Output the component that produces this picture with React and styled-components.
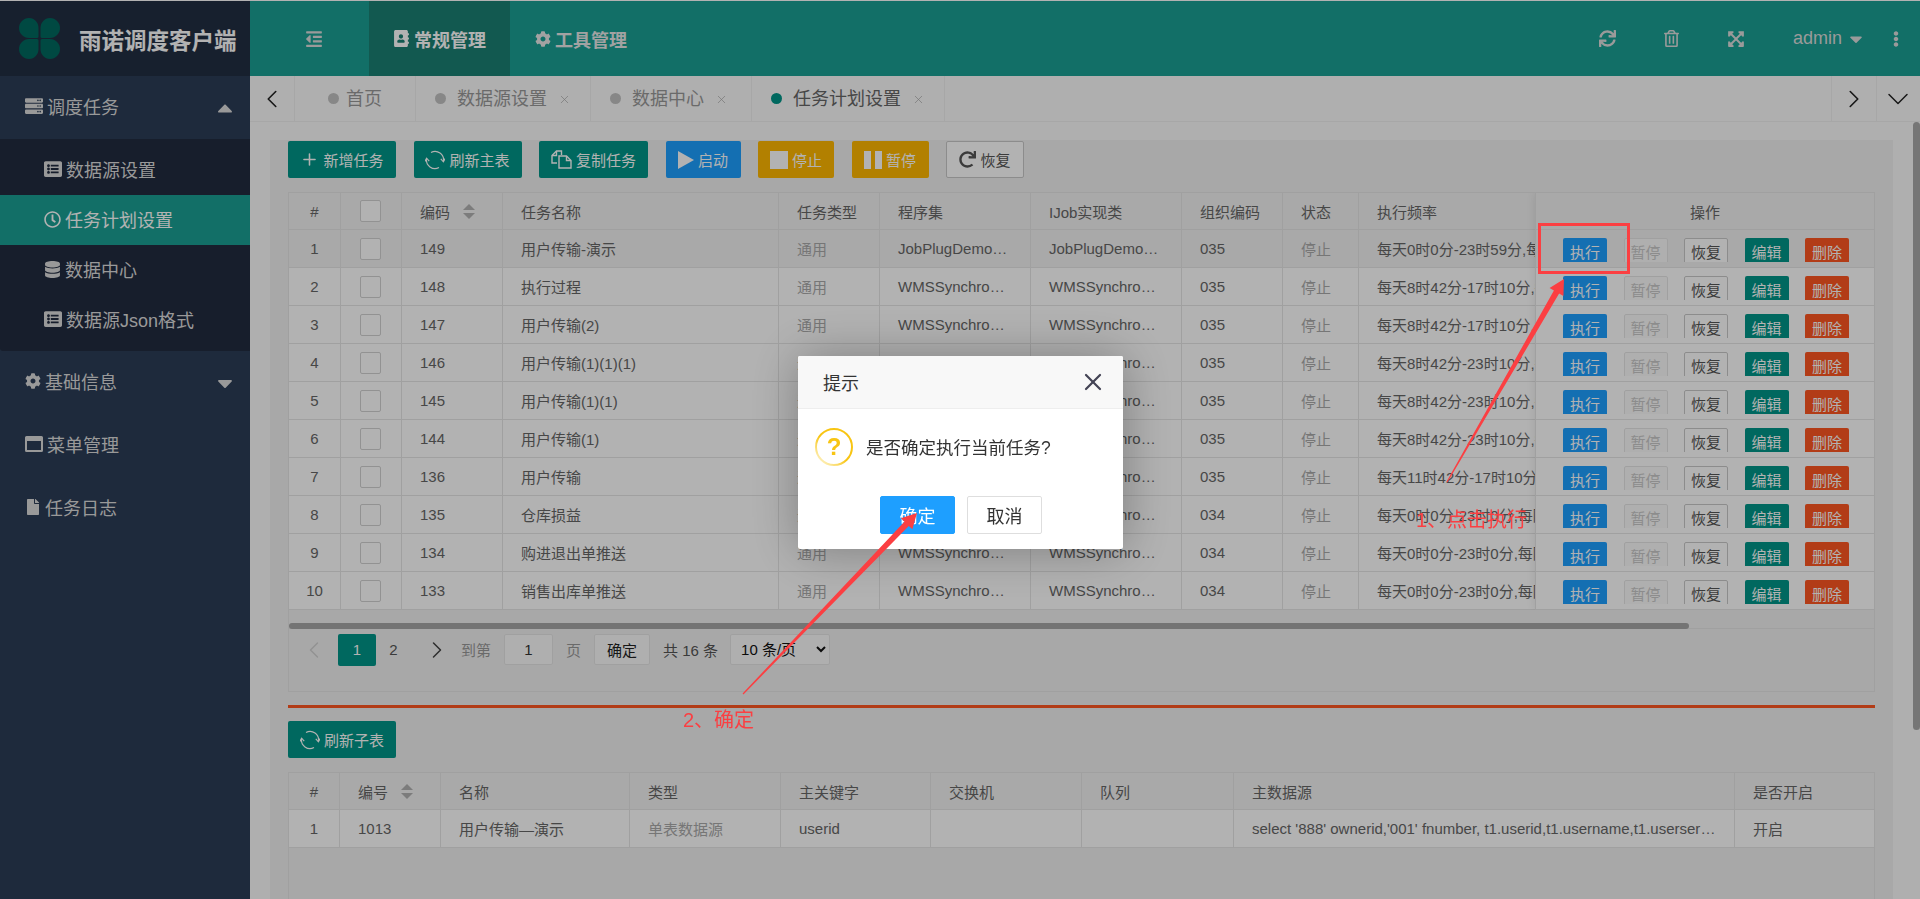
import React from "react"
import styled, { createGlobalStyle } from "styled-components"
import {
  FaServer,
  FaListAlt,
  FaRegClock,
  FaDatabase,
  FaCog,
  FaFile,
  FaAddressBook,
  FaOutdent,
  FaSync,
  FaRegTrashAlt,
  FaExpandArrowsAlt,
  FaEllipsisV,
  FaCaretDown,
  FaCaretUp,
  FaRedo,
} from "react-icons/fa"
import { ChevronLeft, ChevronRight, ChevronDown, Plus, X } from "lucide-react"

const FONT = `"Liberation Sans", "Noto Sans CJK SC", sans-serif`

const GlobalStyle = createGlobalStyle`
  html, body {
    margin: 0;
    height: 100%;
    overflow: hidden;
    background: #fff;
    font-family: ${FONT};
  }
  * { box-sizing: border-box; }
`

const TASKS = [
  [149, "用户传输-演示", "JobPlugDemoWorker", "035", "每天0时0分-23时59分,每隔一分钟执行一次"],
  [148, "执行过程", "WMSSynchroData", "035", "每天8时42分-17时10分,每隔一分钟执行一次"],
  [147, "用户传输(2)", "WMSSynchroData", "035", "每天8时42分-17时10分,每隔一分钟执行一次"],
  [146, "用户传输(1)(1)(1)", "WMSSynchroData", "035", "每天8时42分-23时10分,每隔一分钟执行一次"],
  [145, "用户传输(1)(1)", "WMSSynchroData", "035", "每天8时42分-23时10分,每隔一分钟执行一次"],
  [144, "用户传输(1)", "WMSSynchroData", "035", "每天8时42分-23时10分,每隔一分钟执行一次"],
  [136, "用户传输", "WMSSynchroData", "035", "每天11时42分-17时10分,每隔一分钟执行一次"],
  [135, "仓库损益", "WMSSynchroData", "034", "每天0时0分-23时0分,每隔一小时执行一次"],
  [134, "购进退出单推送", "WMSSynchroData", "034", "每天0时0分-23时0分,每隔一小时执行一次"],
  [133, "销售出库单推送", "WMSSynchroData", "034", "每天0时0分-23时0分,每隔一小时执行一次"],
]

const MAIN_COLS = [52, 61, 101, 276, 101, 151, 151, 101, 76, 388, 339]
const SUB_COLS = [51, 101, 189, 151, 150, 151, 152, 501, 140]

// tapered annotation arrow, thin at the tail
const arrowPoints = (x1, y1, x2, y2, tail = 0.6, neck = 3, wing = 8, head = 15) => {
  const len = Math.hypot(x2 - x1, y2 - y1)
  const ux = (x2 - x1) / len
  const uy = (y2 - y1) / len
  const nx = -uy
  const ny = ux
  const bx = x2 - ux * head
  const by = y2 - uy * head
  const pt = (x, y, s) => `${x + nx * s},${y + ny * s}`
  return [
    pt(x1, y1, tail),
    pt(bx, by, neck),
    pt(bx, by, wing),
    `${x2},${y2}`,
    pt(bx, by, -wing),
    pt(bx, by, -neck),
    pt(x1, y1, -tail),
  ].join(" ")
}

const RefreshRing = () => (
  <svg width="20" height="20" viewBox="0 0 20 20" fill="none" stroke="currentColor" strokeWidth="1.2">
    <path d="M6 2.5A8.5 8.5 0 0 1 18.4 11.5" />
    <path d="M15.8 8.8 18.4 11.8 20 8.6" />
    <path d="M14 17.5A8.5 8.5 0 0 1 1.6 8.5" />
    <path d="M0 11.4 1.6 8.2 4.2 11.2" />
  </svg>
)

const CopyGlyph = () => (
  <svg width="21" height="19" viewBox="0 0 21 19" fill="none" stroke="currentColor" strokeWidth="1.4">
    <path d="M6 13H1V5.5L5.5 1H10.5V5" />
    <path d="M1 5.5H5.5V1" />
    <path d="M8 6H15.5L20 10.5V18H8Z" />
    <path d="M15.5 6V10.5H20" />
  </svg>
)

const PlayGlyph = () => (
  <svg width="16" height="18" viewBox="0 0 16 18" fill="currentColor">
    <polygon points="0,0 16,9 0,18" />
  </svg>
)

const PauseGlyph = () => (
  <svg width="18" height="18" viewBox="0 0 18 18" fill="currentColor">
    <rect x="0" y="0" width="7" height="18" />
    <rect x="11" y="0" width="7" height="18" />
  </svg>
)

const WindowGlyph = () => (
  <svg width="18" height="16" viewBox="0 0 18 16" fill="currentColor">
    <path
      fillRule="evenodd"
      d="M1.5 0H16.5Q18 0 18 1.5V14.5Q18 16 16.5 16H1.5Q0 16 0 14.5V1.5Q0 0 1.5 0ZM2 5V14H16V5Z"
    />
  </svg>
)

const QuestionRing = () => (
  <QuestionWrap>
    <svg width="38" height="38" viewBox="0 0 38 38" fill="none">
      <defs>
        <linearGradient id="ring" x1="0.85" y1="0.1" x2="0.15" y2="0.9">
          <stop offset="0.55" stopColor="#f8c513" />
          <stop offset="1" stopColor="#fdeeb4" />
        </linearGradient>
      </defs>
      <circle cx="19" cy="19" r="18" stroke="url(#ring)" strokeWidth="2" />
    </svg>
    <QuestionMark>?</QuestionMark>
  </QuestionWrap>
)

const Logo = () => (
  <svg width="41" height="41" viewBox="0 0 41 41" fill="#00695f">
    <path d="M10 0C15.5 0 19.5 4.5 19.5 10V18.5Q19.5 20 18 20H10C4.5 20 0 15.5 0 10S4.5 0 10 0Z" />
    <path d="M31 0C25.5 0 21.5 4.5 21.5 10V18.5Q21.5 20 23 20H31C36.5 20 41 15.5 41 10S36.5 0 31 0Z" />
    <path d="M10 41C15.5 41 19.5 36.5 19.5 31V22.5Q19.5 21 18 21H10C4.5 21 0 25.5 0 31S4.5 41 10 41Z" />
    <path d="M31 41C25.5 41 21.5 36.5 21.5 31V22.5Q21.5 21 23 21H31C36.5 21 41 25.5 41 31S36.5 41 31 41Z" />
  </svg>
)

const App = () => {
  return (
    <>
      <GlobalStyle />
      <Shell>
        <Sidebar>
          <Brand>
            <Logo />
            <BrandName>雨诺调度客户端</BrandName>
          </Brand>
          <MenuItem>
            <FaServer size={18} />
            <MenuLabel>调度任务</MenuLabel>
            <MenuCaret>
              <FaCaretUp size={24} />
            </MenuCaret>
          </MenuItem>
          <SubMenu>
            <SubItem>
              <FaListAlt size={18} />
              <span>数据源设置</span>
            </SubItem>
            <SubItem $active>
              <FaRegClock size={17} />
              <span>任务计划设置</span>
            </SubItem>
            <SubItem>
              <FaDatabase size={17} />
              <span>数据中心</span>
            </SubItem>
            <SubItem>
              <FaListAlt size={18} />
              <span>数据源Json格式</span>
            </SubItem>
          </SubMenu>
          <MenuItem>
            <FaCog size={16} />
            <MenuLabel>基础信息</MenuLabel>
            <MenuCaret>
              <FaCaretDown size={24} />
            </MenuCaret>
          </MenuItem>
          <MenuItem>
            <WindowGlyph />
            <MenuLabel>菜单管理</MenuLabel>
          </MenuItem>
          <MenuItem>
            <FaFile size={16} />
            <MenuLabel>任务日志</MenuLabel>
          </MenuItem>
        </Sidebar>

        <Main>
          <TopBar>
            <Hamburger>
              <FaOutdent size={18} />
            </Hamburger>
            <TopTab $active>
              <FaAddressBook size={17} />
              常规管理
            </TopTab>
            <TopTab>
              <FaCog size={16} />
              工具管理
            </TopTab>
            <TopRight>
              <TopIcon>
                <FaSync size={17} />
              </TopIcon>
              <TopIcon>
                <FaRegTrashAlt size={17} />
              </TopIcon>
              <TopIcon>
                <FaExpandArrowsAlt size={18} />
              </TopIcon>
              <UserName>
                admin
                <FaCaretDown size={20} />
              </UserName>
              <MoreDots>
                <FaEllipsisV size={16} />
              </MoreDots>
            </TopRight>
          </TopBar>

          <TabBar>
            <TabArrow>
              <ChevronLeft size={30} strokeWidth={1.3} />
            </TabArrow>
            <Tab $home>
              <TabDot />
              首页
            </Tab>
            <Tab>
              <TabDot />
              数据源设置
              <TabClose>
                <X size={13} strokeWidth={1.3} />
              </TabClose>
            </Tab>
            <Tab $tail={23}>
              <TabDot />
              数据中心
              <TabClose>
                <X size={13} strokeWidth={1.3} />
              </TabClose>
            </Tab>
            <Tab $active>
              <TabDot $active />
              任务计划设置
              <TabClose>
                <X size={13} strokeWidth={1.3} />
              </TabClose>
            </Tab>
            <TabSpacer />
            <TabArrow $side>
              <ChevronRight size={30} strokeWidth={1.3} />
            </TabArrow>
            <TabArrow $side>
              <ChevronDown size={36} strokeWidth={1} />
            </TabArrow>
          </TabBar>

          <Body>
            <Pane>
              <Toolbar>
                <ToolButton $w={108}>
                  <Plus size={19} strokeWidth={2} />
                  新增任务
                </ToolButton>
                <ToolButton $w={108}>
                  <RefreshRing />
                  刷新主表
                </ToolButton>
                <ToolButton $w={109}>
                  <CopyGlyph />
                  复制任务
                </ToolButton>
                <ToolButton $w={75} $tone="#1e9fff">
                  <PlayGlyph />
                  启动
                </ToolButton>
                <ToolButton $w={76} $tone="#ffb800">
                  <StopSquare />
                  停止
                </ToolButton>
                <ToolButton $w={77} $tone="#ffb800">
                  <PauseGlyph />
                  暂停
                </ToolButton>
                <ToolButton $w={78} $plain>
                  <FaRedo size={17} />
                  恢复
                </ToolButton>
              </Toolbar>

              <TableBox>
                <TableClip>
                  <Table $width={1797}>
                    <colgroup>
                      {MAIN_COLS.map((w, i) => (
                        <col key={i} width={w} />
                      ))}
                    </colgroup>
                    <thead>
                      <tr>
                        <Th $center>#</Th>
                        <Th $center>
                          <CheckBox />
                        </Th>
                        <Th>
                          <SortLabel>
                            编码
                            <SortCarets />
                          </SortLabel>
                        </Th>
                        <Th>任务名称</Th>
                        <Th>任务类型</Th>
                        <Th>程序集</Th>
                        <Th>IJob实现类</Th>
                        <Th>组织编码</Th>
                        <Th>状态</Th>
                        <Th>执行频率</Th>
                        <Th />
                      </tr>
                    </thead>
                    <tbody>
                      {TASKS.map((t, i) => (
                        <tr key={t[0]}>
                          <Td $center $hover={i === 0}>
                            {i + 1}
                          </Td>
                          <Td $center $hover={i === 0}>
                            <CheckBox />
                          </Td>
                          <Td $hover={i === 0}>{t[0]}</Td>
                          <Td $hover={i === 0}>{t[1]}</Td>
                          <Td $hover={i === 0} $muted>
                            通用
                          </Td>
                          <Td $hover={i === 0}>{t[2]}</Td>
                          <Td $hover={i === 0}>{t[2]}</Td>
                          <Td $hover={i === 0}>{t[3]}</Td>
                          <Td $hover={i === 0} $muted>
                            停止
                          </Td>
                          <Td $hover={i === 0}>{t[4]}</Td>
                          <Td $hover={i === 0} />
                        </tr>
                      ))}
                    </tbody>
                  </Table>
                  <FixedOps>
                    <Table $width={339}>
                      <thead>
                        <tr>
                          <Th $center>操作</Th>
                        </tr>
                      </thead>
                      <tbody>
                        {TASKS.map((t, i) => (
                          <tr key={t[0]}>
                            <Td $hover={i === 0} $ops>
                              <ActionRow>
                                <ActionButton $bg="#1e9fff" $fg="#fff">执行</ActionButton>
                                <ActionButton $bg="#fbfbfb" $fg="#c9c9c9" $line="#e6e6e6">暂停</ActionButton>
                                <ActionButton $bg="#fff" $fg="#555" $line="#c9c9c9">恢复</ActionButton>
                                <ActionButton $bg="#009688" $fg="#fff">编辑</ActionButton>
                                <ActionButton $bg="#ff5722" $fg="#fff">删除</ActionButton>
                              </ActionRow>
                            </Td>
                          </tr>
                        ))}
                      </tbody>
                    </Table>
                  </FixedOps>
                </TableClip>
                <HScroll>
                  <HThumb />
                </HScroll>
                <Pager>
                  <PagerNav>
                    <PageArrow $w={49} $off>
                      <ChevronLeft size={28} strokeWidth={1.3} />
                    </PageArrow>
                    <PageNumber $active>1</PageNumber>
                    <PageNumber>2</PageNumber>
                    <PageArrow $w={52}>
                      <ChevronRight size={28} strokeWidth={1.3} />
                    </PageArrow>
                  </PagerNav>
                  <PagerHint>到第</PagerHint>
                  <PageInput defaultValue="1" />
                  <PagerHint>页</PagerHint>
                  <PagerButton>确定</PagerButton>
                  <PagerText>共 16 条</PagerText>
                  <PageSelect defaultValue="10">
                    <option value="10">10 条/页</option>
                    <option value="20">20 条/页</option>
                  </PageSelect>
                </Pager>
              </TableBox>

              <Divider />

              <ToolButton $w={108}>
                <RefreshRing />
                刷新子表
              </ToolButton>

              <SubTableBox>
                <Table $width={1586}>
                  <colgroup>
                    {SUB_COLS.map((w, i) => (
                      <col key={i} width={w} />
                    ))}
                  </colgroup>
                  <thead>
                    <tr>
                      <Th $center>#</Th>
                      <Th>
                        <SortLabel>
                          编号
                          <SortCarets />
                        </SortLabel>
                      </Th>
                      <Th>名称</Th>
                      <Th>类型</Th>
                      <Th>主关键字</Th>
                      <Th>交换机</Th>
                      <Th>队列</Th>
                      <Th>主数据源</Th>
                      <Th>是否开启</Th>
                    </tr>
                  </thead>
                  <tbody>
                    <tr>
                      <Td $center>1</Td>
                      <Td>1013</Td>
                      <Td>用户传输—演示</Td>
                      <Td $muted>单表数据源</Td>
                      <Td>userid</Td>
                      <Td />
                      <Td />
                      <Td>select '888' ownerid,'001' fnumber, t1.userid,t1.username,t1.userserial from users t1</Td>
                      <Td>开启</Td>
                    </tr>
                  </tbody>
                </Table>
              </SubTableBox>
            </Pane>
            <ScrollRail>
              <ScrollThumb />
            </ScrollRail>
          </Body>
        </Main>
      </Shell>

      <Shade>
        <Dialog>
          <DialogHead>
            提示
            <DialogClose>
              <X size={28} strokeWidth={1.9} />
            </DialogClose>
          </DialogHead>
          <DialogBody>
            <QuestionRing />
            <DialogText>是否确定执行当前任务?</DialogText>
          </DialogBody>
          <DialogFoot>
            <DialogButton $primary>确定</DialogButton>
            <DialogButton>取消</DialogButton>
          </DialogFoot>
        </Dialog>
      </Shade>

      <MarkBox />
      <ArrowLayer width="1920" height="899" viewBox="0 0 1920 899">
        <polygon points={arrowPoints(1447, 482, 1564, 279)} fill="#fb3f42" />
        <polygon points={arrowPoints(743, 694, 917, 513)} fill="#fb3f42" />
      </ArrowLayer>
      <MarkText $x={1416} $y={508}>1、点击执行</MarkText>
      <MarkText $x={683} $y={708}>2、确定</MarkText>
    </>
  )
}

const Shell = styled.div`
  display: flex;
  height: 100vh;
  padding-top: 1px;
  overflow: hidden;
  background: #fff;
`

const Sidebar = styled.aside`
  flex: 0 0 250px;
  background: #2c3d56;
  color: #dcdcdc;
`

const Brand = styled.div`
  display: flex;
  align-items: center;
  height: 75px;
  padding-left: 19px;
  background: #222e42;
  svg {
    flex: none;
  }
`

const BrandName = styled.div`
  margin-left: 19px;
  font-size: 22.5px;
  font-weight: 700;
  color: #fff;
  white-space: nowrap;
  letter-spacing: 0;
`

const MenuItem = styled.div`
  display: flex;
  align-items: center;
  height: 63px;
  padding: 0 0 3px 25px;
  font-size: 18px;
`

const MenuLabel = styled.span`
  margin-left: 4px;
`

const MenuCaret = styled.span`
  display: flex;
  margin: 3px 13px 0 auto;
`

const SubMenu = styled.div`
  padding: 6px 0;
  background: #212b3f;
  border-radius: 0 0 0 3px;
`

const SubItem = styled.div`
  display: flex;
  align-items: center;
  gap: 4px;
  height: 50px;
  padding: 0 0 2px 44px;
  font-size: 18px;
  background: ${p => (p.$active ? "#1aa094" : "transparent")};
  color: ${p => (p.$active ? "#fff" : "#dcdcdc")};
`

const Main = styled.main`
  flex: 1;
  min-width: 0;
  display: flex;
  flex-direction: column;
  background: #fbfbfb;
`

const TopBar = styled.header`
  flex: 0 0 75px;
  display: flex;
  align-items: stretch;
  background: #1aa094;
  color: #ddd;
`

const Hamburger = styled.div`
  flex: 0 0 119px;
  display: flex;
  align-items: center;
  justify-content: center;
  padding-left: 9px;
`

const TopTab = styled.div`
  flex: 0 0 ${p => (p.$active ? "141px" : "136px")};
  display: flex;
  align-items: center;
  gap: 4px;
  padding-left: ${p => (p.$active ? "24px" : "25px")};
  font-size: 18px;
  font-weight: 700;
  color: ${p => (p.$active ? "#fff" : "#e8e8e8")};
  background: ${p => (p.$active ? "#1a8073" : "transparent")};
`

const TopRight = styled.div`
  margin-left: auto;
  display: flex;
  align-items: center;
`

const TopIcon = styled.span`
  display: flex;
  justify-content: center;
  width: 64px;
`

const UserName = styled.span`
  display: flex;
  align-items: center;
  gap: 4px;
  margin-left: 25px;
  font-size: 18px;
`

const MoreDots = styled.span`
  display: flex;
  margin: 0 16px 0 22px;
`

const TabBar = styled.nav`
  flex: 0 0 46px;
  display: flex;
  border-bottom: 1px solid #efefef;
  font-size: 18px;
  color: #999;
`

const TabArrow = styled.div`
  flex: 0 0 ${p => (p.$side ? "44.5px" : "45px")};
  display: flex;
  align-items: center;
  justify-content: center;
  color: #222;
  ${p => (p.$side ? "border-left: 1px solid #efefef;" : "border-right: 1px solid #efefef;")}
`

const Tab = styled.div`
  display: flex;
  align-items: center;
  padding: ${p => (p.$home ? "0 33px 4px" : `0 ${p.$tail || 19}px 4px 19px`)};
  gap: ${p => (p.$home ? "7px" : "11px")};
  border-right: 1px solid #efefef;
  color: ${p => (p.$active ? "#666" : "#999")};
`

const TabDot = styled.i`
  width: 11px;
  height: 11px;
  margin-top: 4px;
  border-radius: 50%;
  background: ${p => (p.$active ? "#009688" : "#c2c2c2")};
`

const TabClose = styled.span`
  display: flex;
  margin: 6px 0 0 0;
  color: #aaa;
`

const TabSpacer = styled.div`
  flex: 1;
`

const Body = styled.div`
  flex: 1;
  min-height: 0;
  display: flex;
`

const Pane = styled.section`
  flex: 0 0 1623px;
  min-width: 0;
  margin: 18px 0 0 20px;
  padding: 1px 18px 0;
  background: #f1f1f1;
`

const Toolbar = styled.div`
  display: flex;
  gap: 17.5px;
  margin-bottom: 14px;
`

const ToolButton = styled.button`
  display: flex;
  align-items: center;
  justify-content: center;
  gap: 4px;
  width: ${p => p.$w}px;
  height: 37px;
  padding: 0;
  border: 1px solid ${p => (p.$plain ? "#c9c9c9" : "transparent")};
  border-radius: 2px;
  font-family: ${FONT};
  font-size: 15px;
  color: ${p => (p.$plain ? "#555" : "#fff")};
  background: ${p => (p.$plain ? "#fff" : p.$tone || "#009688")};
`

const StopSquare = styled.i`
  width: 18px;
  height: 18px;
  background: #fff;
`

const TableBox = styled.div`
  border: 1px solid #e6e6e6;
  height: 500px;
`

const TableClip = styled.div`
  position: relative;
  overflow: hidden;
`

const Table = styled.table`
  table-layout: fixed;
  width: ${p => p.$width}px;
  border-collapse: separate;
  border-spacing: 0;
  font-size: 15px;
  color: #666;
`

const Th = styled.th`
  height: 37px;
  padding: 0 18px;
  font-weight: 400;
  text-align: ${p => (p.$center ? "center" : "left")};
  background: #f2f2f2;
  border-right: 1px solid #e6e6e6;
  border-bottom: 1px solid #e6e6e6;
  white-space: nowrap;
`

const Td = styled.td`
  height: 38px;
  padding: ${p => (p.$ops ? "8px 0 0 27px" : p.$center ? "0" : "0 18px")};
  vertical-align: ${p => (p.$ops ? "top" : "middle")};
  text-align: ${p => (p.$center ? "center" : "left")};
  background: ${p => (p.$hover ? "#f2f2f2" : "#fff")};
  color: ${p => (p.$muted ? "#aaa" : "#666")};
  border-right: 1px solid #e6e6e6;
  border-bottom: 1px solid #e6e6e6;
  white-space: nowrap;
  overflow: hidden;
  text-overflow: ellipsis;
`

const CheckBox = styled.span`
  display: inline-block;
  width: 21px;
  height: 22px;
  margin-right: 2px;
  vertical-align: middle;
  background: #fff;
  border: 1px solid #d2d2d2;
  border-radius: 2px;
`

const SortLabel = styled.span`
  display: flex;
  align-items: center;
  gap: 13px;
`

const SortCarets = styled.i`
  position: relative;
  width: 13px;
  height: 15px;
  &::before,
  &::after {
    content: "";
    position: absolute;
    left: 0;
    border-left: 6.5px solid transparent;
    border-right: 6.5px solid transparent;
  }
  &::before {
    top: 0;
    border-bottom: 6.5px solid #b2b2b2;
  }
  &::after {
    bottom: 0;
    border-top: 6.5px solid #b2b2b2;
  }
`

const FixedOps = styled.div`
  position: absolute;
  top: 0;
  right: 0;
  width: 339px;
  box-shadow: -1px 0 8px rgba(0, 0, 0, 0.08);
  border-left: 1px solid #e6e6e6;
`

const ActionRow = styled.div`
  display: flex;
  gap: 16.5px;
  height: 24px;
  overflow: hidden;
`

const ActionButton = styled.button`
  flex: 0 0 44px;
  height: 26px;
  padding: 0;
  font-family: ${FONT};
  font-size: 15px;
  border-radius: 2px;
  border: 1px solid ${p => p.$line || "transparent"};
  color: ${p => p.$fg};
  background: ${p => p.$bg};
`

const HScroll = styled.div`
  height: 19px;
  padding-top: 13px;
  border-bottom: 1px solid #e6e6e6;
`

const HThumb = styled.div`
  width: 1400px;
  height: 6px;
  border-radius: 3px;
  background: #a6a6a6;
`

const Pager = styled.div`
  display: flex;
  align-items: center;
  gap: 13px;
  height: 61px;
  padding-bottom: 20px;
  font-size: 15px;
  color: #666;
`

const PagerNav = styled.div`
  display: flex;
  align-items: center;
  margin-right: -15px;
`

const PageArrow = styled.span`
  display: flex;
  justify-content: center;
  width: ${p => p.$w}px;
  color: ${p => (p.$off ? "#d2d2d2" : "#444")};
`

const PageNumber = styled.span`
  display: flex;
  align-items: center;
  justify-content: center;
  width: ${p => (p.$active ? "38px" : "35px")};
  height: 32px;
  border-radius: 2px;
  background: ${p => (p.$active ? "#009688" : "transparent")};
  color: ${p => (p.$active ? "#fff" : "#555")};
`

const PagerHint = styled.span`
  color: #999;
`

const PagerText = styled.span`
  color: #555;
`

const PageInput = styled.input`
  width: 49px;
  height: 31px;
  border: 1px solid #e6e6e6;
  border-radius: 2px;
  background: #fbfbfb;
  text-align: center;
  font-family: ${FONT};
  font-size: 15px;
  color: #333;
`

const PagerButton = styled.button`
  width: 56px;
  height: 31px;
  padding: 0;
  border: 1px solid #e6e6e6;
  border-radius: 2px;
  background: #fbfbfb;
  font-family: ${FONT};
  font-size: 15px;
  color: #222;
`

const PageSelect = styled.select`
  width: 100px;
  height: 31px;
  margin-left: -1px;
  padding-left: 6px;
  border: 1px solid #e6e6e6;
  border-radius: 2px;
  background: #fbfbfb;
  font-family: ${FONT};
  font-size: 15px;
  color: #111;
`

const Divider = styled.div`
  height: 3px;
  margin: 13px 0;
  background: #ff5722;
`

const SubTableBox = styled.div`
  height: 200px;
  margin-top: 14px;
  border: 1px solid #e6e6e6;
  border-bottom: 0;
`

const ScrollRail = styled.div`
  margin-left: auto;
  flex: 0 0 7px;
`

const ScrollThumb = styled.div`
  height: 608px;
  border-radius: 4px;
  background: #aaa;
`

const Shade = styled.div`
  position: fixed;
  inset: 0;
  display: flex;
  align-items: center;
  justify-content: center;
  padding-top: 6px;
  background: rgba(0, 0, 0, 0.3);
`

const Dialog = styled.div`
  width: 325px;
  height: 193px;
  margin-left: 1px;
  background: #fff;
  border-radius: 2px;
  box-shadow: 1px 1px 50px rgba(0, 0, 0, 0.3);
`

const DialogHead = styled.div`
  display: flex;
  align-items: center;
  justify-content: space-between;
  height: 53px;
  padding: 0 16px 0 25px;
  background: #f8f8f8;
  border-bottom: 1px solid #eee;
  border-radius: 2px 2px 0 0;
  font-size: 18px;
  color: #333;
`

const DialogClose = styled.span`
  display: flex;
  color: #444455;
`

const DialogBody = styled.div`
  display: flex;
  align-items: center;
  gap: 13px;
  height: 87px;
  padding: 0 0 12px 17px;
`

const QuestionWrap = styled.span`
  position: relative;
  display: flex;
  width: 38px;
  height: 38px;
`

const QuestionMark = styled.span`
  position: absolute;
  inset: 0;
  display: flex;
  align-items: center;
  justify-content: center;
  font-size: 24px;
  font-weight: 700;
  color: #f8c513;
`

const DialogText = styled.div`
  font-size: 17.5px;
  color: #333;
  white-space: nowrap;
`

const DialogFoot = styled.div`
  display: flex;
  justify-content: center;
  gap: 12px;
  padding-left: 1px;
`

const DialogButton = styled.button`
  width: 75px;
  height: 38px;
  padding: 0;
  border-radius: 2px;
  font-family: ${FONT};
  font-size: 18px;
  color: ${p => (p.$primary ? "#fff" : "#333")};
  background: ${p => (p.$primary ? "#1e9fff" : "#fff")};
  border: 1px solid ${p => (p.$primary ? "#1e9fff" : "#dedede")};
`

const MarkBox = styled.div`
  position: fixed;
  left: 1538px;
  top: 223px;
  width: 92px;
  height: 51px;
  border: 3px solid #fb3f42;
`

const ArrowLayer = styled.svg`
  position: fixed;
  left: 0;
  top: 0;
  pointer-events: none;
`

const MarkText = styled.div`
  position: fixed;
  left: ${p => p.$x}px;
  top: ${p => p.$y}px;
  font-size: 20px;
  line-height: 24px;
  color: #fb3f42;
  white-space: nowrap;
`

export default App
